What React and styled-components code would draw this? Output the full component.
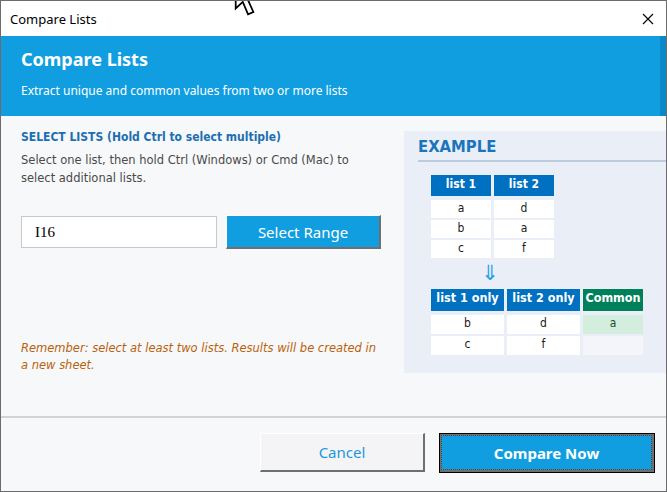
import React from 'react';
import styled, { createGlobalStyle } from 'styled-components';

const GlobalStyle = createGlobalStyle`
    html, body {
        margin: 0;
        padding: 0;
        background: #ffffff;
    }
    * {
        box-sizing: border-box;
    }
`;

const uiFont = `"Noto Sans", "Open Sans", sans-serif`;
const tahoma = `"DejaVu Sans Condensed", "DejaVu Sans", sans-serif`;
const verdana = `"DejaVu Sans", sans-serif`;

const Window = styled.div`
    position: relative;
    width: 667px;
    height: 492px;
    border: 1px solid #6c6c6c;
    background: #f7f8fa;
    display: flex;
    flex-direction: column;
    overflow: hidden;
    font-family: ${uiFont};
`;

const TitleBar = styled.div`
    flex: 0 0 35px;
    background: #ffffff;
    display: flex;
    align-items: center;
    justify-content: space-between;
    padding: 0 12px 0 9px;
    font-size: 13px;
    color: #000000;
`;

const Header = styled.div`
    flex: 0 0 80px;
    background: #109ee0;
    border-right: 6px solid #0b88c8;
    padding: 10px 20px 0;
    color: #ffffff;
`;

const HeaderTitle = styled.h1`
    margin: 0;
    font-size: 18px;
    font-weight: 700;
    line-height: 26px;
`;

const HeaderSub = styled.p`
    margin: 11px 0 0;
    font-size: 12px;
    line-height: 16px;
`;

const Body = styled.div`
    flex: 0 0 300px;
    display: flex;
`;

const LeftColumn = styled.div`
    flex: 0 0 403px;
    padding: 12px 20px 0 20px;
    display: flex;
    flex-direction: column;
    font-family: ${verdana};
`;

const SectionTitle = styled.h2`
    margin: 0;
    font-family: ${tahoma};
    font-size: 12px;
    font-weight: 700;
    color: #1c6fb1;
    line-height: 18px;
`;

const Description = styled.p`
    margin: 5px 0 0;
    font-size: 11.5px;
    line-height: 18px;
    color: #4a4a4a;
`;

const RangeRow = styled.div`
    display: flex;
    align-items: center;
    gap: 9px;
    margin-top: 28px;
`;

const RangeInput = styled.div`
    width: 196px;
    height: 32px;
    background: #ffffff;
    border: 1px solid #c9c9c9;
    padding-left: 13px;
    display: flex;
    align-items: center;
    font-family: "Liberation Serif", serif;
    font-size: 15px;
    color: #000000;
`;

const RaisedButton = styled.div`
    display: flex;
    align-items: center;
    justify-content: center;
    font-family: ${uiFont};
    font-size: 15px;
    border-top: 1px solid #ffffff;
    border-left: 1px solid #ffffff;
    border-right: 2px solid #6f6f6f;
    border-bottom: 2px solid #6f6f6f;
    background: ${p => (p.$primary ? '#109ee0' : '#f4f4f6')};
    color: ${p => (p.$primary ? '#ffffff' : '#1a98de')};
`;

const SelectButton = styled(RaisedButton)`
    width: 155px;
    height: 34px;
`;

const Reminder = styled.p`
    margin: auto 0 42px;
    font-size: 11.5px;
    font-style: italic;
    line-height: 17px;
    color: #b9620c;
`;

const ExamplePanel = styled.div`
    flex: 0 0 262px;
    margin-top: 15px;
    height: 242px;
    background: #e9eef7;
    padding: 5px 0 0 14px;
    font-family: ${tahoma};
`;

const ExampleTitle = styled.h3`
    margin: 0;
    font-size: 16.5px;
    font-weight: 700;
    color: #1a75bb;
    line-height: 22px;
    padding-bottom: 2px;
    border-bottom: 2px solid #bccbdd;
`;

const Tables = styled.div`
    padding: 13px 0 0 13px;
    display: flex;
    flex-direction: column;
`;

const Grid = styled.div`
    display: grid;
    grid-template-columns: ${p => p.$cols};
    column-gap: ${p => p.$gap}px;
    row-gap: 2px;
`;

const HeadCell = styled.div`
    height: ${p => p.$h}px;
    margin-bottom: 2px;
    background: ${p => (p.$green ? '#00805a' : '#0070c0')};
    color: #ffffff;
    font-weight: 700;
    font-size: ${p => p.$fs}px;
    text-align: center;
    line-height: 18px;
`;

const Cell = styled.div`
    height: ${p => p.$h}px;
    background: ${p => p.$bg || '#ffffff'};
    color: ${p => p.$color || '#1a1a1a'};
    font-size: 12px;
    text-align: center;
    line-height: ${p => p.$h - 2}px;
`;

const Arrow = styled.div`
    margin: 4px 0 5px 50px;
    height: 22px;
    color: #22a0e8;
    font-size: 21px;
    line-height: 22px;
    font-family: ${verdana};
`;

const Footer = styled.div`
    flex: 1;
    border-top: 2px solid #d3d3d3;
    display: flex;
    justify-content: flex-end;
    align-items: flex-start;
    padding: 15px 11px 0 0;
    gap: 14px;
`;

const CancelButton = styled(RaisedButton)`
    width: 165px;
    height: 39px;
`;

const PrimaryOuter = styled.div`
    width: 216px;
    height: 40px;
    border: 1px solid #000000;
    background: #6f6f6f;
    padding: 1px 2px 2px 1px;
`;

const PrimaryInner = styled.div`
    height: 100%;
    background: #109ee0;
    border: 1px dotted #6b3a1a;
    display: flex;
    align-items: center;
    justify-content: center;
    color: #ffffff;
    font-size: 15px;
    font-weight: 700;
`;

const Cursor = styled.svg`
    position: absolute;
    left: 232px;
    top: -22px;
`;

function CloseIcon() {
    return (
        <svg width="12" height="12" viewBox="0 0 12 12">
            <path d="M1 1 L11 11 M11 1 L1 11" stroke="#000" strokeWidth="1.1" fill="none" />
        </svg>
    );
}

const table1 = [['a', 'd'], ['b', 'a'], ['c', 'f']];

export default function App() {
    return (
        <>
            <GlobalStyle />
            <Window>
                <TitleBar>
                    <span>Compare Lists</span>
                    <CloseIcon />
                </TitleBar>
                <Header>
                    <HeaderTitle>Compare Lists</HeaderTitle>
                    <HeaderSub>Extract unique and common values from two or more lists</HeaderSub>
                </Header>
                <Body>
                    <LeftColumn>
                        <SectionTitle>SELECT LISTS (Hold Ctrl to select multiple)</SectionTitle>
                        <Description>
                            Select one list, then hold Ctrl (Windows) or Cmd (Mac) to<br />
                            select additional lists.
                        </Description>
                        <RangeRow>
                            <RangeInput>I16</RangeInput>
                            <SelectButton $primary>Select Range</SelectButton>
                        </RangeRow>
                        <Reminder>
                            Remember: select at least two lists. Results will be created in<br />
                            a new sheet.
                        </Reminder>
                    </LeftColumn>
                    <ExamplePanel>
                        <ExampleTitle>EXAMPLE</ExampleTitle>
                        <Tables>
                            <Grid $cols="60px 60px" $gap={3}>
                                <HeadCell $h={21} $fs={12}>list 1</HeadCell>
                                <HeadCell $h={21} $fs={12}>list 2</HeadCell>
                                {table1.flat().map((v, i) => (
                                    <Cell key={i} $h={18}>{v}</Cell>
                                ))}
                            </Grid>
                            <Arrow>⇓</Arrow>
                            <Grid $cols="73px 73px 60px" $gap={3}>
                                <HeadCell $h={22} $fs={12.5}>list 1 only</HeadCell>
                                <HeadCell $h={22} $fs={12.5}>list 2 only</HeadCell>
                                <HeadCell $h={22} $fs={12.5} $green>Common</HeadCell>
                                <Cell $h={19}>b</Cell>
                                <Cell $h={19}>d</Cell>
                                <Cell $h={19} $bg="#d3eedc" $color="#1d4f34">a</Cell>
                                <Cell $h={19}>c</Cell>
                                <Cell $h={19}>f</Cell>
                                <Cell $h={19} $bg="#f3f5fa"></Cell>
                            </Grid>
                        </Tables>
                    </ExamplePanel>
                </Body>
                <Footer>
                    <CancelButton>Cancel</CancelButton>
                    <PrimaryOuter>
                        <PrimaryInner>Compare Now</PrimaryInner>
                    </PrimaryOuter>
                </Footer>
                <Cursor width="36" height="40" viewBox="0 0 30 34">
                    <path d="M2 1 L2 25 L8 19.5 L12.5 30 L17 28 L12.5 18 L20.5 18 Z" fill="#ffffff" stroke="#000000" strokeWidth="1.5" strokeLinejoin="miter" />
                </Cursor>
            </Window>
        </>
    );
}
